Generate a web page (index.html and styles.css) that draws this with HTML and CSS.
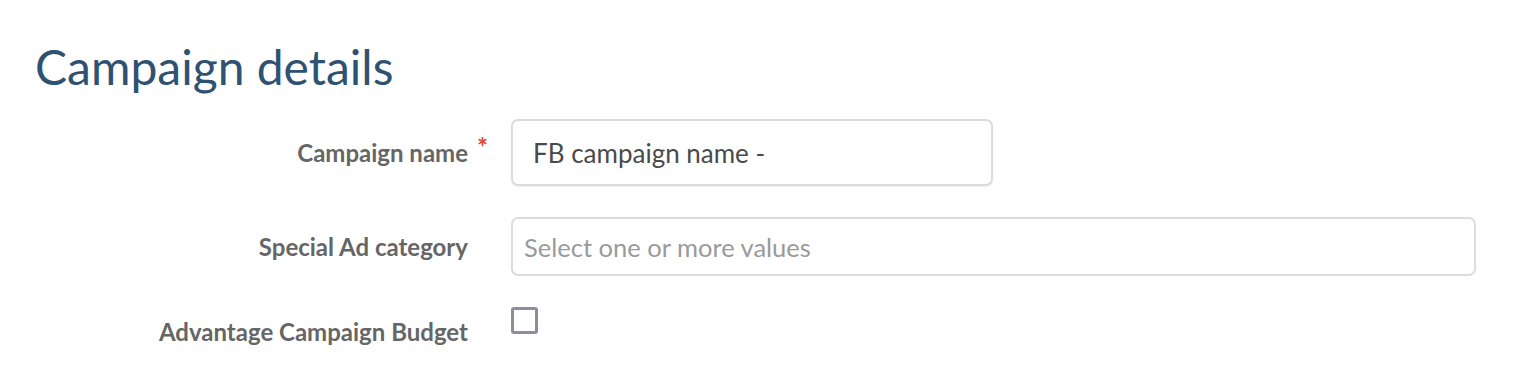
FILE: index.html
```html
<!DOCTYPE html>
<html>
<head>
<meta charset="utf-8">
<link rel="stylesheet" href="styles.css">
</head>
<body>
<div class="page">
  <h1 class="title">Campaign details</h1>
  <div class="form">
    <div class="label">Campaign name</div>
    <div class="marker"><span class="req">*</span></div>
    <div class="control"><div class="input input-name">FB campaign name -</div></div>

    <div class="label">Special Ad category</div>
    <div class="marker"></div>
    <div class="control"><div class="input input-select placeholder">Select one or more values</div></div>

    <div class="label label-low">Advantage Campaign Budget</div>
    <div class="marker"></div>
    <div class="control control-top"><span class="checkbox"></span></div>
  </div>
</div>
</body>
</html>
```
FILE: styles.css
```css
html, body {
  margin: 0;
  padding: 0;
  background: #ffffff;
}
.page {
  font-family: Lato, "Open Sans", sans-serif;
  padding: 38px 45px 0 35px;
}
.title {
  margin: 0;
  font-size: 48px;
  font-weight: 400;
  line-height: 58px;
  color: #2f5273;
}
.form {
  display: grid;
  grid-template-columns: 433px 43px 1fr;
  grid-template-rows: 67px 59px 59px;
  row-gap: 31px;
  margin-top: 23px;
}
.label {
  display: flex;
  align-items: center;
  justify-content: flex-end;
  font-size: 24px;
  font-weight: 700;
  color: #666666;
}
.label-low {
  align-items: flex-start;
  padding-top: 10px;
}
.marker {
  display: flex;
  align-items: center;
}
.req {
  color: #e0463c;
  font-size: 26px;
  font-weight: 700;
  margin-left: 9px;
  margin-top: -12px;
}
.control {
  display: flex;
  align-items: center;
}
.control-top {
  align-items: flex-start;
}
.input {
  box-sizing: border-box;
  height: 100%;
  border: 2px solid #dcdcdc;
  border-radius: 7px;
  display: flex;
  align-items: center;
  padding-left: 20px;
  font-size: 26px;
  color: #4a4a4a;
  background: #fff;
}
.input-name {
  width: 482px;
  box-shadow: 0 1px 2px rgba(0,0,0,0.06);
}
.input-select {
  width: 965px;
  padding-left: 11px;
  font-size: 25.5px;
}
.placeholder {
  color: #9a9a9a;
}
.checkbox {
  box-sizing: border-box;
  display: block;
  width: 27px;
  height: 27px;
  border: 3px solid #8f8d9b;
  border-radius: 3px;
  background: #fff;
}
```
